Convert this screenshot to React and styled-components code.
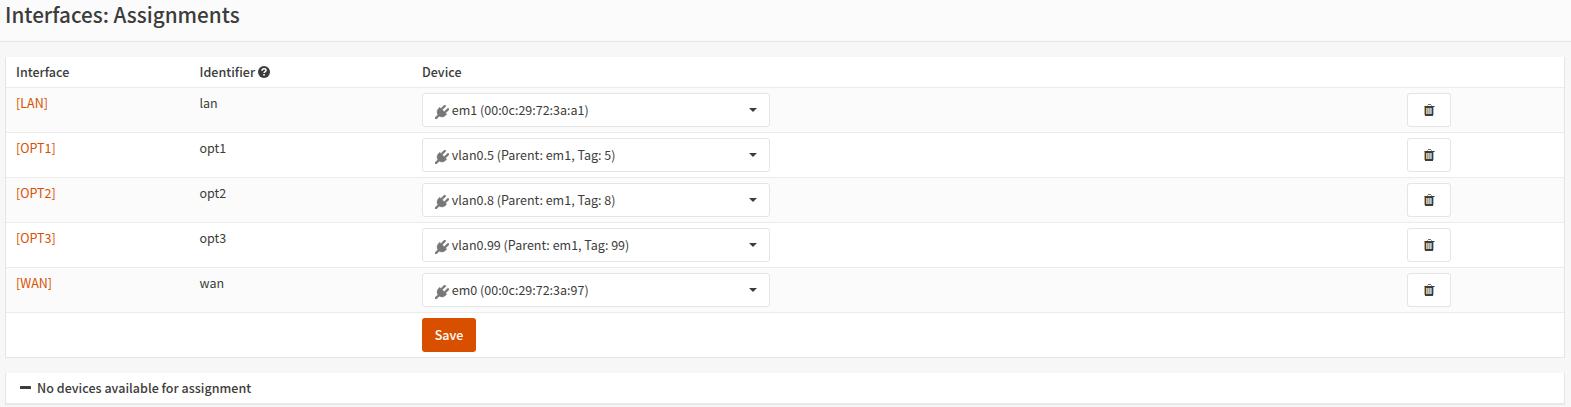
import React from 'react';
import styled, { createGlobalStyle } from 'styled-components';

const GlobalStyle = createGlobalStyle`
  * { box-sizing: border-box; }
  body {
    margin: 0;
    background: #f7f7f7;
    color: #3c3c3b;
    font-family: "Noto Sans CJK SC", "Open Sans", sans-serif;
    font-size: 12.5px;
    line-height: 20px;
    overflow: hidden;
  }
`;

const PageHeader = styled.header`
  height: 42px;
  padding: 0 5px;
  background: #fbfbfb;
  border-bottom: 1px solid #e5e5e5;
`;

const Title = styled.h1`
  margin: 0;
  font-size: 20.7px;
  font-weight: 500;
  line-height: 28px;
`;

const Content = styled.main`
  display: flex;
  flex-direction: column;
  gap: 15px;
  padding: 15px 6px 0 5px;
`;

const Panel = styled.section`
  background: #fff;
  border: 1px solid #e5e5e5;
  border-top: 0;
`;

const Row = styled.div`
  display: grid;
  grid-template-columns: 183.5px 222.5px 985px 1fr;
  min-height: ${(p) => (p.$head ? 30 : 45)}px;
  border-top: ${(p) => (p.$head ? 0 : '1px solid #ebebeb')};
  background: ${(p) => (p.$striped ? '#fbfbfb' : '#fff')};
  font-weight: ${(p) => (p.$head ? 500 : 400)};
  letter-spacing: ${(p) => (p.$head ? '0.03px' : 'normal')};
`;

const Cell = styled.div`
  display: flex;
  align-items: flex-start;
  gap: 3px;
  padding: 5px 10px;
`;

const InterfaceLink = styled.a`
  color: #d94f00;
  text-decoration: none;
`;

const Select = styled.button`
  display: flex;
  align-items: center;
  width: 348px;
  height: 34px;
  padding: 0 12px;
  border: 1px solid #e5e5e5;
  border-radius: 3px;
  background: #fff;
  color: inherit;
  font: inherit;
`;

const SelectLabel = styled.span`
  flex: 1;
  margin-left: 2.8px;
  text-align: left;
`;

const Caret = styled.span`
  border: 4px solid transparent;
  border-top-color: #3c3c3b;
  border-bottom: 0;
`;

const DeleteButton = styled.button`
  display: flex;
  align-items: center;
  justify-content: center;
  width: 44px;
  height: 34px;
  padding: 0 0 0 2px;
  border: 1px solid #e5e5e5;
  border-radius: 3px;
  background: #fff;
`;

const SaveButton = styled.button`
  width: 54px;
  height: 34px;
  padding: 0;
  border: 0;
  border-radius: 3px;
  background: #d94f00;
  color: #fff;
  font: inherit;
  font-weight: 500;
`;

const Notice = styled.div`
  display: flex;
  align-items: center;
  gap: 6px;
  height: 31px;
  padding: 0 13px 0 14px;
  border-bottom: 1px solid #ebebeb;
  font-weight: 500;
  letter-spacing: 0.03px;
`;

const HelpSvg = styled.svg`
  width: 12px;
  height: 12px;
  margin-top: 4px;
`;

const PlugSvg = styled.svg`
  width: 14px;
  height: 14px;
  margin-top: 4px;
`;

const MinusSvg = styled.svg`
  width: 11px;
  height: 3px;
  margin-bottom: 1px;
`;

const HelpIcon = () => (
  <HelpSvg viewBox="0 0 12 12">
    <circle cx="6" cy="6" r="6" fill="#3c3c3b" />
    <path d="M4 4.7C4.1 3.2 5 2.8 6 2.8c1.2 0 2 .7 2 1.6C8 5.6 6.1 5.7 6.1 7" fill="none" stroke="#fff" strokeWidth="1.5" />
    <rect x="5.2" y="8" width="1.6" height="1.6" fill="#fff" />
  </HelpSvg>
);

const PlugIcon = () => (
  <PlugSvg viewBox="0 0 1792 1792" fill="#777" stroke="#777" strokeWidth="50">
    <path d="M1755 453q37 38 37 90.5t-37 90.5l-401 400 150 150-160 160q-163 163-389.500 186.500t-411.500-100.500l-362 362h-181v-181l362-362q-124-185-100.500-411.500t186.500-389.500l160-160 150 150 400-401q38-37 91-37t90 37 37 90.500-37 90.500l-400 401 234 234 401-400q38-37 91-37t90 37z" />
  </PlugSvg>
);

const TrashIcon = () => (
  <svg width="12" height="12" viewBox="0 0 12 12" shapeRendering="crispEdges">
    <path d="M3 1h1v1H3z" fill="#e0a45a" />
    <path d="M4 0h3v1H4z" fill="#77716c" />
    <path d="M7 1h1v1H7z" fill="#7aa6cf" />
    <path d="M1 2h9v1H1z" fill="#3c3c3b" />
    <path d="M0 2h1v1H0z" fill="#b98347" />
    <path d="M10 2h1v1h-1z" fill="#6d93b8" />
    <path d="M0 3h1v8H0z" fill="#e2a55a" />
    <path d="M1 3h8v9H1z" fill="#3c3c3b" />
    <path d="M2 4h1v6H2zM4 4h1v6H4zM6 4h1v6H6z" fill="#9dcbf4" />
    <path d="M3 4h1v6H3zM5 4h1v6H5zM7 4h1v6H7z" fill="#c29a6b" />
    <path d="M9 3h1v8H9z" fill="#8fc0ee" />
  </svg>
);

const MinusIcon = () => (
  <MinusSvg viewBox="0 0 11 3">
    <rect width="11" height="3" rx="0.6" fill="#3c3c3b" />
  </MinusSvg>
);

const interfaces = [
  { name: 'LAN', id: 'lan', device: 'em1 (00:0c:29:72:3a:a1)' },
  { name: 'OPT1', id: 'opt1', device: 'vlan0.5 (Parent: em1, Tag: 5)' },
  { name: 'OPT2', id: 'opt2', device: 'vlan0.8 (Parent: em1, Tag: 8)' },
  { name: 'OPT3', id: 'opt3', device: 'vlan0.99 (Parent: em1, Tag: 99)' },
  { name: 'WAN', id: 'wan', device: 'em0 (00:0c:29:72:3a:97)' },
];

export default function App() {
  return (
    <>
      <GlobalStyle />
      <PageHeader>
        <Title>Interfaces: Assignments</Title>
      </PageHeader>
      <Content>
        <Panel>
          <Row $head>
            <Cell>Interface</Cell>
            <Cell>Identifier<HelpIcon /></Cell>
            <Cell>Device</Cell>
            <Cell />
          </Row>
          {interfaces.map((item, i) => (
            <Row key={item.id} $striped={i % 2 === 0}>
              <Cell><InterfaceLink href="#">[{item.name}]</InterfaceLink></Cell>
              <Cell>{item.id}</Cell>
              <Cell>
                <Select>
                  <PlugIcon />
                  <SelectLabel>{item.device}</SelectLabel>
                  <Caret />
                </Select>
              </Cell>
              <Cell><DeleteButton aria-label="Delete"><TrashIcon /></DeleteButton></Cell>
            </Row>
          ))}
          <Row>
            <Cell />
            <Cell />
            <Cell><SaveButton>Save</SaveButton></Cell>
            <Cell />
          </Row>
        </Panel>
        <Panel>
          <Notice><MinusIcon />No devices available for assignment</Notice>
        </Panel>
      </Content>
    </>
  );
}
